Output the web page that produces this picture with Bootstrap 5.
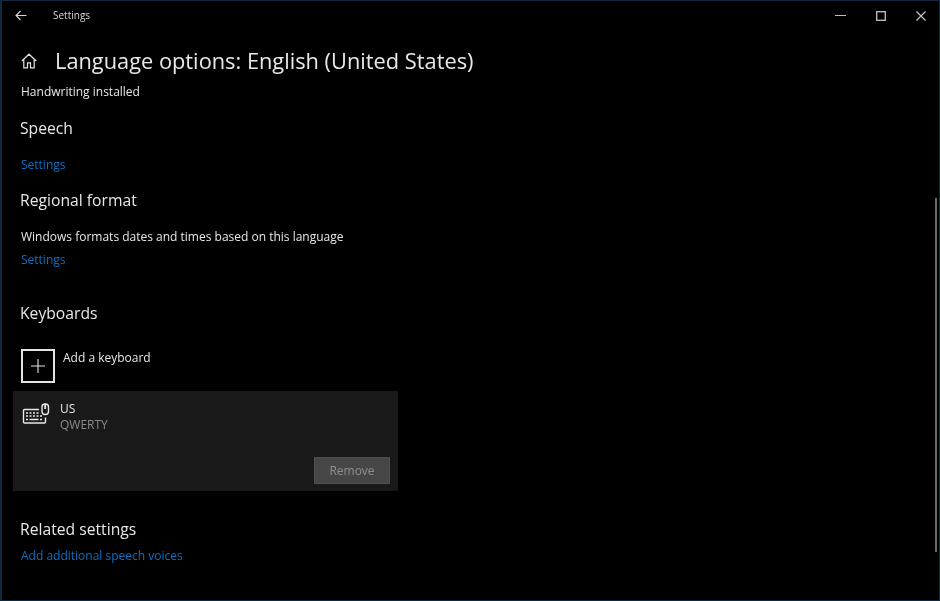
<!DOCTYPE html>
<html lang="en">
<head>
<meta charset="utf-8">
<title>Settings</title>
<link href="https://cdn.jsdelivr.net/npm/bootstrap@5.3.0/dist/css/bootstrap.min.css" rel="stylesheet">
<style>
html,body{height:100%;margin:0;background:#000;overflow:hidden}
body{font-family:"Open Sans","Noto Sans","Liberation Sans",sans-serif;color:#fff}
.win{width:940px;height:601px;background:#000;border:1px solid #12283c;border-left-width:2px;position:relative;overflow:hidden;font-size:12px;line-height:17px;filter:blur(.35px)}
.titlebar{height:29px;padding-left:13px;color:#d8d8d8}
.titlebar .ttl{font-size:10px;margin-left:26px}
.ctrls{margin-left:auto;gap:30px;padding-right:13px}
.pagehead{margin-top:17px;height:28px;padding-left:19px}
.pagehead h1{font-size:21.8px;font-weight:400;line-height:28px;margin:0 0 0 18px;color:#e8e8e8}
.pane{padding-left:19px;color:#e6e6e6}
.sect{font-size:15.7px;line-height:22px;font-weight:400;margin:0 0 0 -1px;color:#e8e8e8}
.lnk{color:#0b6fc2;text-decoration:none;display:block}
.l1{margin-top:8px}
.s1{margin-top:17px}
.l2{margin-top:17px}
.s2{margin-top:16px}
.l3{margin-top:17px}
.l4{margin-top:6px}
.s3{margin-top:34px}
.addrow{margin-top:25px;gap:8px}
.plusbox{width:34px;height:34px;border:2px solid #e4e4e4;color:#e4e4e4}
.addrow span{line-height:16px;margin-top:1px}
.kbcard{width:385px;height:100px;background:#191919;margin-left:-8px;margin-top:8px;padding:8px 8px 7px 9px}
.kbname{line-height:16px;margin-left:10px;margin-top:2px}
.kbsub{color:#8a8a8a}
.btn.rmbtn,.btn.rmbtn:disabled{width:76px;height:27px;border-radius:0;background:#464646;border:1px solid #4e4e4e;color:#8e8e8e;font-size:12px;padding:0;line-height:25px;opacity:1}
.s4{margin-top:27px}
.rel-link{margin-top:7px}
.thumb{position:absolute;right:2px;top:197px;width:2px;height:354px;background:#6a6a6a}
</style>
</head>
<body>
<div class="win">
  <div class="titlebar d-flex align-items-center">
    <svg width="12" height="11" viewBox="0 0 12 11" fill="none" stroke="#d8d8d8" stroke-width="1.1"><path d="M11.5 5.5H1M5.5 1 1 5.5l4.500 4.500"/></svg>
    <span class="ttl">Settings</span>
    <div class="ctrls d-flex align-items-center">
      <svg width="11" height="11" viewBox="0 0 11 11" stroke="#bdbdbd" fill="none"><path d="M0 5.500h11"/></svg>
      <svg width="10" height="10" viewBox="0 0 10 10" stroke="#c4c4c4" stroke-width="1.300" fill="none"><rect x=".7" y=".7" width="8.600" height="8.600"/></svg>
      <svg width="10" height="10" viewBox="0 0 10 10" stroke="#c4c4c4" stroke-width="1.200" fill="none"><path d="M.5.500l9 9M9.500.500l-9 9"/></svg>
    </div>
  </div>
  <div class="pagehead d-flex align-items-center">
    <svg width="16" height="16" viewBox="0 0 16 16" fill="none" stroke="#e4e4e4" stroke-width="1.200"><path d="M.8 8 8 1.200 15.200 8M2.800 6.500v8.300h3.700v-5h3v5h3.700V6.500"/></svg>
    <h1>Language options: English (United States)</h1>
  </div>
  <div class="pane">
    <div class="l1">Handwriting installed</div>
    <h2 class="sect s1">Speech</h2>
    <a class="lnk l2" href="#">Settings</a>
    <h2 class="sect s2">Regional format</h2>
    <div class="l3">Windows formats dates and times based on this language</div>
    <a class="lnk l4" href="#">Settings</a>
    <h2 class="sect s3">Keyboards</h2>
    <div class="addrow d-flex align-items-start">
      <div class="plusbox d-flex align-items-center justify-content-center">
        <svg width="14" height="14" viewBox="0 0 14 14" stroke="#e4e4e4" stroke-width="1.100" fill="none"><path d="M7 0v14M0 7h14"/></svg>
      </div>
      <span>Add a keyboard</span>
    </div>
    <div class="kbcard d-flex flex-column">
      <div class="d-flex align-items-start">
        <svg class="mt-1" width="28" height="22" viewBox="0 0 28 22" fill="none" stroke="#e8e8e8" stroke-width="1.400">
          <path d="M17 6.500H2.500a1 1 0 0 0-1 1V19a1 1 0 0 0 1 1h20a1 1 0 0 0 1-1v-4.500"/>
          <path d="M4 10h2M7.500 10h2M11 10h2M14.500 10h2M4 13h2M7.500 13h2M11 13h2M14.500 13h2M18 13h2M4 16.500h2M7.500 16.500h9M18 16.500h2" stroke-width="1.700"/>
          <rect x="20" y="1" width="6.500" height="10.500" rx="3"/>
          <path d="M23.200 1v5" stroke-width="1.800"/>
        </svg>
        <div class="kbname">
          <div>US</div>
          <div class="kbsub">QWERTY</div>
        </div>
      </div>
      <div class="mt-auto d-flex justify-content-end">
        <button class="btn rmbtn" type="button" disabled>Remove</button>
      </div>
    </div>
    <h2 class="sect s4">Related settings</h2>
    <a class="lnk rel-link" href="#">Add additional speech voices</a>
  </div>
  <div class="thumb"></div>
</div>
<script src="https://cdn.jsdelivr.net/npm/bootstrap@5.3.0/dist/js/bootstrap.bundle.min.js"></script>
</body>
</html>
